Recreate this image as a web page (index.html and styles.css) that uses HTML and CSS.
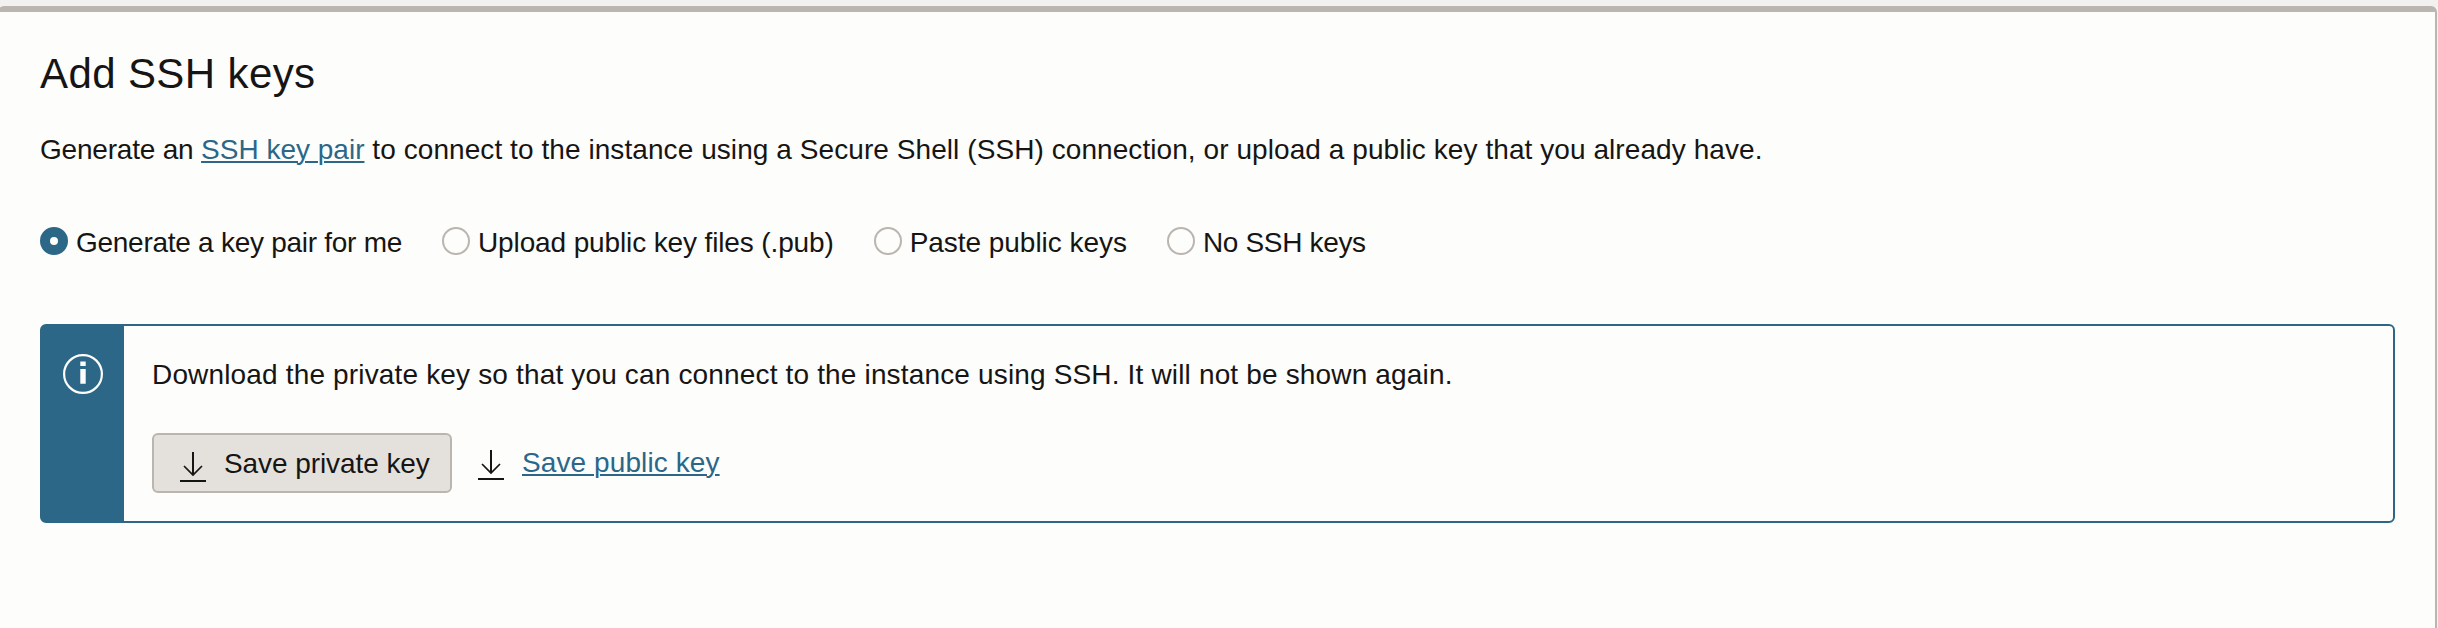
FILE: index.html
```html
<!DOCTYPE html>
<html lang="en">
<head>
<meta charset="utf-8">
<title>Add SSH keys</title>
<link rel="stylesheet" href="styles.css">
</head>
<body>
<section class="card">
  <h2 class="title">Add SSH keys</h2>
  <p class="intro"><span class="intro-lead">Generate an </span><a class="link" href="#">SSH key pair</a><span class="intro-rest"> to connect to the instance using a Secure Shell (SSH) connection, or upload a public key that you already have.</span></p>
  <div class="options">
    <label class="option option-generate"><input class="radio" type="radio" name="ssh" checked><span>Generate a key pair for me</span></label>
    <label class="option option-upload"><input class="radio" type="radio" name="ssh"><span>Upload public key files (.pub)</span></label>
    <label class="option option-paste"><input class="radio" type="radio" name="ssh"><span>Paste public keys</span></label>
    <label class="option option-none"><input class="radio" type="radio" name="ssh"><span>No SSH keys</span></label>
  </div>
  <div class="notice">
    <div class="notice-side">
      <svg class="info-icon" viewBox="0 0 40 40" width="40" height="40"><circle cx="20" cy="20" r="18.9" fill="none" stroke="#fdfdfc" stroke-width="2.2"/><path d="M17.3 7.5h5.4v4.6h-5.4zM17.3 15h5.4v14.7h-5.4z" fill="#fdfdfc"/></svg>
    </div>
    <div class="notice-body">
      <p class="notice-text">Download the private key so that you can connect to the instance using SSH. It will not be shown again.</p>
      <div class="actions">
        <button class="button" type="button">
          <svg class="icon" viewBox="0 0 26 30" width="26" height="30"><path d="M13 0v23M0 29h26" fill="none" stroke="#161513" stroke-width="2"/><path d="M4 14l9 9 9-9" fill="none" stroke="#161513" stroke-width="1.7"/></svg>
          <span>Save private key</span>
        </button>
        <div class="secondary">
          <svg class="icon" viewBox="0 0 26 30" width="26" height="30"><path d="M13 0v23M0 29h26" fill="none" stroke="#161513" stroke-width="2"/><path d="M4 14l9 9 9-9" fill="none" stroke="#161513" stroke-width="1.7"/></svg>
          <a class="link save-public" href="#">Save public key</a>
        </div>
      </div>
    </div>
  </div>
</section>
</body>
</html>
```
FILE: styles.css
```css
* { box-sizing: border-box; }
html { height: 100%; }
body {
  margin: 0;
  height: 100%;
  padding-top: 6px;
  overflow: hidden;
  background: #f3f1ef;
  color: #161513;
  font: 28px/40px "Liberation Sans", Arial, sans-serif;
}
.card {
  height: 640px;
  margin: 0 1px 0 -2px;
  padding: 34px 40px 0;
  border: 2px solid #bbb5b0;
  border-top-width: 6px;
  border-radius: 6px;
  background: #fdfdfc;
}
.title { margin: 0; font-size: 42px; line-height: 56px; font-weight: 400; letter-spacing: 0.39px; }
.intro { margin: 28px 0 0; }
.intro-lead { letter-spacing: -0.2px; }
.intro-rest { letter-spacing: 0.072px; }
.link {
  color: #2c6788;
  text-decoration-thickness: 2px;
  text-underline-offset: 2px;
}
.options { display: flex; gap: 40px; margin-top: 53px; }
.option { display: flex; gap: 8px; white-space: nowrap; }
.option-generate { letter-spacing: -0.27px; }
.option-upload { letter-spacing: -0.13px; }
.option-paste { letter-spacing: -0.04px; }
.option-none { letter-spacing: -0.33px; }
.radio {
  appearance: none;
  flex: none;
  width: 28px;
  height: 28px;
  margin: 4px 0 0;
  border: 2px solid #bbb5b0;
  border-radius: 50%;
  background: #fdfdfc;
}
.radio:checked { border: 10px solid #2c6788; }
.notice {
  display: flex;
  height: 199px;
  margin-top: 61px;
  border: 2px solid #2c6788;
  border-radius: 6px;
}
.notice-side { width: 82px; padding: 28px 0 0 21px; background: #2c6788; }
.info-icon, .icon { display: block; flex: none; }
.notice-body { padding: 29px 28px 0; }
.notice-text { margin: 0; letter-spacing: 0.16px; }
.actions { display: flex; gap: 26px; margin-top: 38px; }
.button {
  display: flex;
  width: 300px;
  height: 60px;
  padding: 9px 0 0 26px;
  gap: 18px;
  border: 2px solid #bbb5b0;
  border-radius: 6px;
  background: #e4e1dd;
  color: inherit;
  font: inherit;
  letter-spacing: -0.08px;
  white-space: nowrap;
}
.button .icon { margin-top: 8px; }
.secondary { display: flex; gap: 18px; padding-top: 10px; }
.secondary .icon { margin-top: 7px; }
.save-public { letter-spacing: 0.1px; }
```
